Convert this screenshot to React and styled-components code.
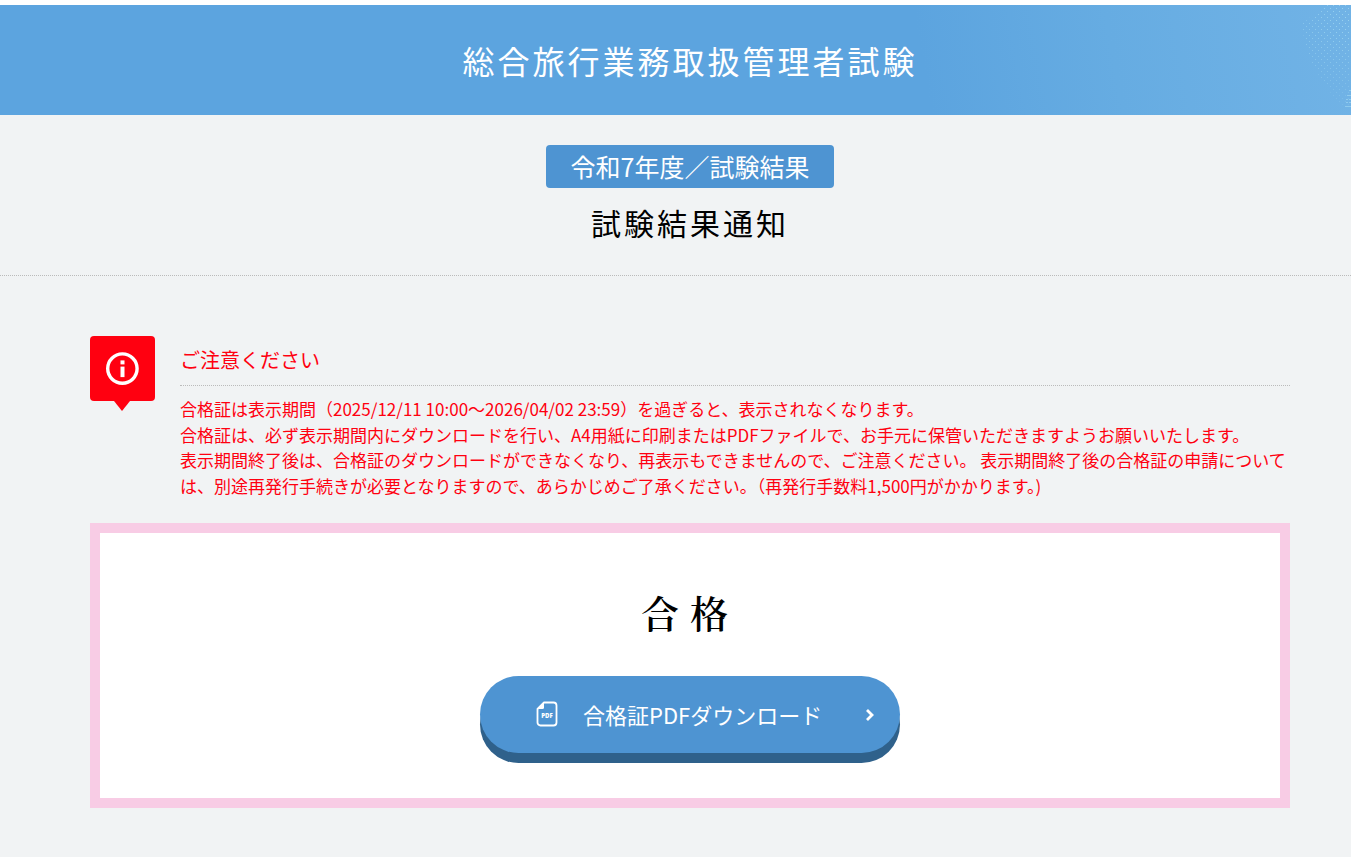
import React from 'react';
import styled, { createGlobalStyle } from 'styled-components';

const GlobalStyle = createGlobalStyle`
  * {
    box-sizing: border-box;
  }

  body {
    margin: 0;
    background: #f1f3f4;
    color: #000;
    font-family: "Noto Sans CJK JP", sans-serif;
  }

  h1, h2, h3, p {
    margin: 0;
    font-weight: 400;
  }
`;

const Page = styled.div`
  min-height: 100vh;
  border-top: 5px solid #fff;
`;

const SiteHeader = styled.header`
  position: relative;
  display: flex;
  align-items: center;
  justify-content: center;
  min-height: 110px;
  padding: 0 61px 0 90px;
  overflow: hidden;
  background: linear-gradient(80deg, #5ca4df 0%, #5ca4df 68%, #66ace2 82%, #71b3e6 100%);

  h1 {
    color: #fff;
    font-size: 32px;
    line-height: 48px;
    letter-spacing: 3px;
    text-align: center;
  }
`;

const HeaderPattern = styled.svg`
  position: absolute;
  top: 0;
  right: 0;
  width: 60px;
  height: 110px;
`;

const TitleArea = styled.section`
  display: flex;
  flex-direction: column;
  align-items: center;
  padding: 30px 61px 30px 90px;
  border-bottom: 1px dotted #bbb;

  h2 {
    margin-top: 11px;
    font-size: 30px;
    line-height: 46px;
    letter-spacing: 3px;
  }
`;

const YearLabel = styled.p`
  padding: 3px 25px;
  border-radius: 4px;
  background: #4e94d2;
  color: #fff;
  font-size: 25px;
  line-height: 37px;
`;

const Content = styled.main`
  padding: 60px 61px 49px 90px;
`;

const Notice = styled.section`
  display: flex;
  align-items: flex-start;
  gap: 25px;
  color: #ff0010;
`;

const NoticeIcon = styled.div`
  position: relative;
  flex: none;
  display: flex;
  align-items: center;
  justify-content: center;
  width: 65px;
  height: 65px;
  border-radius: 4px;
  background: #ff0010;

  &::after {
    content: "";
    position: absolute;
    top: 100%;
    left: 24px;
    border: 8px solid transparent;
    border-top: 10px solid #ff0010;
    border-bottom: 0;
  }
`;

const NoticeBody = styled.div`
  flex: 1;
  min-width: 0;

  h3 {
    padding: 9px 0 11px;
    border-bottom: 1px dotted #bbb;
    font-size: 20px;
    line-height: 29px;
  }

  p {
    padding-top: 10px;
    font-size: 17px;
    line-height: 1.5;
  }
`;

const ResultBox = styled.section`
  display: flex;
  flex-direction: column;
  align-items: center;
  margin-top: 25px;
  padding: 49px 20px 35px;
  border: 10px solid #f8cce5;
  background: #fff;
`;

const ResultText = styled.p`
  font-family: "Noto Serif CJK JP", "Noto Serif JP", "Noto Sans CJK JP", serif;
  font-size: 38px;
  font-weight: 600;
  line-height: 60px;
  letter-spacing: 11px;
`;

const DownloadButton = styled.button`
  display: flex;
  align-items: center;
  width: 420px;
  max-width: 100%;
  min-height: 77px;
  margin: 34px 0 10px;
  padding: 0 24px 0 56px;
  border: 0;
  border-radius: 39px;
  background: #4e94d2;
  box-shadow: 0 10px 0 #2f618b;
  color: #fff;
  font: 400 22px/33px "Noto Sans CJK JP", sans-serif;
  cursor: pointer;

  span {
    flex: 1;
    padding-left: 25px;
    text-align: left;
  }
`;

function InfoIcon() {
  return (
    <svg width="34" height="34" viewBox="0 0 34 34" aria-hidden="true">
      <circle cx="16.4" cy="16.6" r="14.7" fill="none" stroke="#fff" strokeWidth="3.4" />
      <rect x="14.5" y="8.4" width="4" height="4" fill="#fff" />
      <rect x="14.5" y="14.6" width="4" height="10.5" fill="#fff" />
    </svg>
  );
}

function PdfIcon() {
  return (
    <svg width="22" height="28" viewBox="0 0 22 28" aria-hidden="true">
      <path d="M8 1.5H17.5A3 3 0 0 1 20.5 4.5V21.5A3 3 0 0 1 17.5 24.5H4.5A3 3 0 0 1 1.5 21.5V8Z" fill="none" stroke="#fff" strokeWidth="1.8" strokeLinejoin="round" />
      <path d="M8 1.5V6.5A1.5 1.5 0 0 1 6.5 8H1.5Z" fill="#fff" />
      <text x="11" y="17" fill="#fff" fontFamily="Open Sans, sans-serif" fontSize="6" fontWeight="800" textAnchor="middle">PDF</text>
    </svg>
  );
}

function ArrowIcon() {
  return (
    <svg width="12" height="14" viewBox="0 0 12 14" aria-hidden="true">
      <path d="M3 2L8 7L3 12" fill="none" stroke="#fff" strokeWidth="2.8" />
    </svg>
  );
}

function Pattern() {
  return (
    <HeaderPattern viewBox="0 0 60 110" aria-hidden="true">
      <defs>
        <pattern id="dots" width="6" height="6" patternUnits="userSpaceOnUse">
          <rect x="0" y="0" width="1" height="1" fill="#9ad3f0" />
          <rect x="3" y="3" width="1" height="1" fill="#9ad3f0" />
        </pattern>
        <radialGradient id="fade" gradientUnits="userSpaceOnUse" cx="60" cy="14" r="86">
          <stop offset="0" stopColor="#fff" />
          <stop offset="0.3" stopColor="#fff" stopOpacity="0.8" />
          <stop offset="1" stopColor="#fff" stopOpacity="0.2" />
        </radialGradient>
        <mask id="dotMask">
          <path d="M34 0L10 20L18 52L32 78L50 101H60V0Z" fill="url(#fade)" />
        </mask>
      </defs>
      <rect width="60" height="110" fill="url(#dots)" mask="url(#dotMask)" />
      <path d="M58 85.5h2M56 90.5h4M55 94.5h2M58 94.5h2M55 97.5h2M58 97.5h2M54 101.5h6" stroke="#8fcbee" strokeWidth="1" fill="none" />
    </HeaderPattern>
  );
}

export default function App() {
  return (
    <Page>
      <GlobalStyle />
      <SiteHeader lang="ja">
        <h1>総合旅行業務取扱管理者試験</h1>
        <Pattern />
      </SiteHeader>
      <TitleArea lang="ja">
        <YearLabel>令和7年度／試験結果</YearLabel>
        <h2>試験結果通知</h2>
      </TitleArea>
      <Content lang="ja">
        <Notice>
          <NoticeIcon>
            <InfoIcon />
          </NoticeIcon>
          <NoticeBody>
            <h3>ご注意ください</h3>
            <p>
              合格証は表示期間（2025/12/11 10:00～2026/04/02 23:59）を過ぎると、表示されなくなります。
              <br />
              合格証は、必ず表示期間内にダウンロードを行い、A4用紙に印刷またはPDFファイルで、お手元に保管いただきますようお願いいたします。
              <br />
              表示期間終了後は、合格証のダウンロードができなくなり、再表示もできませんので、ご注意ください。 表示期間終了後の合格証の申請については、別途再発行手続きが必要となりますので、あらかじめご了承ください。（再発行手数料1,500円がかかります。)
            </p>
          </NoticeBody>
        </Notice>
        <ResultBox>
          <ResultText>合格</ResultText>
          <DownloadButton type="button">
            <PdfIcon />
            <span>合格証PDFダウンロード</span>
            <ArrowIcon />
          </DownloadButton>
        </ResultBox>
      </Content>
    </Page>
  );
}
